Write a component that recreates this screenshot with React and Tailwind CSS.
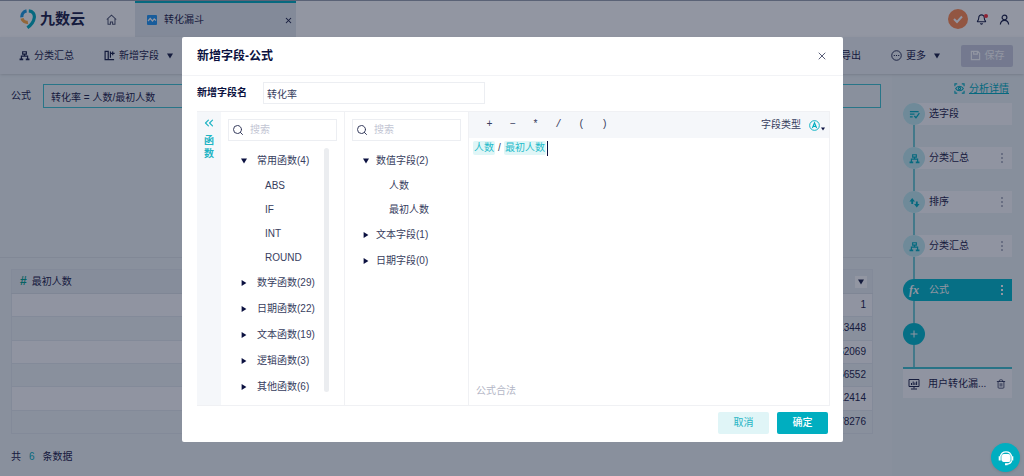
import React, { useState } from 'react';
import { Bell, Search, Trash2, X, ChevronsLeft } from 'lucide-react';

const OPERATORS = ['+', '−', '*', '/', '(', ')'];

const FUNCTION_GROUPS = [
  { name: '常用函数', count: 4, items: ['ABS', 'IF', 'INT', 'ROUND'] },
  { name: '数学函数', count: 29, items: [] },
  { name: '日期函数', count: 22, items: [] },
  { name: '文本函数', count: 19, items: [] },
  { name: '逻辑函数', count: 3, items: [] },
  { name: '其他函数', count: 6, items: [] },
];

const FIELD_GROUPS = [
  { name: '数值字段', count: 2, items: ['人数', '最初人数'] },
  { name: '文本字段', count: 1, items: [] },
  { name: '日期字段', count: 0, items: [] },
];

const STEPS = [
  { name: '选字段', icon: SelectIcon },
  { name: '分类汇总', icon: GroupIcon, menu: true },
  { name: '排序', icon: SortIcon, menu: true },
  { name: '分类汇总', icon: GroupIcon, menu: true },
  { name: '公式', icon: FxIcon, menu: true, active: true },
];

const ROWS = ['1', '0.79313448', '0.62062069', '0.46556552', '0.32412414', '0.18278276'];

function GroupIcon() {
  return (
    <svg viewBox="0 0 12 12" fill="none" stroke="currentColor" strokeWidth="1.3" className="size-[11px]">
      <path d="M4 1.900h4v2.600H4zM6 4.500v2M2.600 10V6.600h6.800V10" />
      <path d="M.6 10.300h4M7.400 10.300h4" strokeWidth="1.800" />
    </svg>
  );
}

function SelectIcon() {
  return (
    <svg viewBox="0 0 12 12" fill="none" stroke="currentColor" strokeWidth="1.4" className="size-[11px]">
      <path d="M1 2.800h9.500M1 5.700h5M1 8.600h3M5.800 7.600l1.800 2L11.300 4.600" />
    </svg>
  );
}

function SortIcon() {
  return (
    <svg viewBox="0 0 12 12" fill="currentColor" className="size-[11px]">
      <path d="M3.500 1L6.500 4.800H4.500V7.600h-2V4.800H.5zM8.500 11.400L5.500 7.600h2V4.800h2v2.800h2z" />
    </svg>
  );
}

function FxIcon() {
  return <span className="font-['Liberation_Serif',serif] text-xs font-bold italic leading-none">fx</span>;
}

function AddFieldIcon() {
  return (
    <svg viewBox="0 0 12 12" fill="none" stroke="currentColor" strokeWidth="1.3" className="size-[11px]">
      <path d="M1.200 1.500h3.400v9H1.200zM4.600 10.400H11M7 1.500v7M9.500 1.600v4.200M7.400 3.700h4.200" />
    </svg>
  );
}

function MonitorIcon() {
  return (
    <svg viewBox="0 0 12 12" fill="none" stroke="currentColor" className="size-3 shrink-0">
      <path d="M1 1.500h10v7H1zM6 8.500v2M3 11h6M3.500 7V5M5.200 7V3.500M6.900 7V4.500M8.600 7V3.500" />
    </svg>
  );
}

function Logo() {
  return (
    <svg viewBox="0 0 16 20" fill="none" strokeWidth="3.2" className="h-5 w-4">
      <path d="M6.600 1.900A5.800 5.800 0 0 0 1.900 8.300" stroke="#1d9be0" />
      <path d="M2 9.400a5.200 5.200 0 0 0 5.900 3.900" stroke="#ffa940" />
      <path d="M8.800 1.900c4 .2 5.900 3 5.500 6.700C13.800 12.500 11.300 16 7.400 18.700" stroke="#00aec0" />
    </svg>
  );
}

function Caret({ open = true, className = 'size-[6px]' }) {
  return (
    <svg viewBox="0 0 6 6" fill="currentColor" className={`shrink-0 ${className}`}>
      {open ? <path d="M0 .6h6L3 5.400z" /> : <path d="M.6 0v6L5.400 3z" />}
    </svg>
  );
}

function Dots() {
  return (
    <svg viewBox="0 0 2 10" fill="currentColor" className="h-[10px] w-[2px]">
      <path d="M0 0h2v2H0zM0 4h2v2H0zM0 8h2v2H0z" />
    </svg>
  );
}

function Header() {
  return (
    <header className="flex h-[37px] border-t border-gray-400 bg-white">
      <div className="flex w-[135px] items-center pl-5">
        <Logo />
        <span className="ml-1 text-[15px] font-bold">九数云</span>
        <button aria-label="首页" className="ml-[21px] text-[#4a4f6b]">
          <svg viewBox="0 0 12 12" fill="none" stroke="currentColor" strokeWidth="1.100" className="size-[11px]">
            <path d="M.8 6L6 1.200 11.200 6M2.200 5v6.200h2.600V8.600h2.400v2.600h2.600V5" />
          </svg>
        </button>
      </div>
      <div className="flex w-[161px] items-center border-t-2 border-[#00aec0] bg-[#e4e9ee] pl-3 pr-[3px]">
        <svg viewBox="0 0 10 10" className="size-[10px]">
          <rect width="10" height="10" rx="1" fill="#2196f3" />
          <path d="M1 6l2.200-2.500L5.500 6l1.700-2.200L9 5.500" fill="none" stroke="#fff" strokeWidth="1.200" />
        </svg>
        <span className="ml-[7px] flex-1">转化漏斗</span>
        <button aria-label="关闭" className="flex size-[10px] items-center justify-center">
          <X size={9} strokeWidth={2.800} className="shrink-0" />
        </button>
      </div>
      <div className="flex flex-1 items-center justify-end gap-2 pr-[14px]">
        <span className="flex size-5 items-center justify-center rounded-full bg-[#ff8a50] text-white">
          <svg viewBox="0 0 12 12" fill="none" stroke="currentColor" strokeWidth="2" className="size-3">
            <path d="M2 6l3 3 5-5.500" />
          </svg>
        </span>
        <button aria-label="通知" className="relative">
          <Bell size={11} strokeWidth={2.400} />
          <span className="absolute -right-px top-0 size-[4px] rounded-full bg-red-500" />
        </button>
        <button aria-label="用户" className="ml-1">
          <svg viewBox="0 0 12 12" fill="none" stroke="currentColor" strokeWidth="1.300" className="size-[11px]">
            <circle cx="6" cy="3.800" r="2.600" />
            <path d="M1.500 11.500c.2-3 2-4.600 4.500-4.600s4.300 1.600 4.500 4.600" />
          </svg>
        </button>
      </div>
    </header>
  );
}

function Toolbar() {
  return (
    <div className="relative flex h-[37px] items-center bg-[#eef3f6] pl-[19px] pr-[11px] shadow-sm">
      <button className="flex items-center gap-1">
        <GroupIcon />
        分类汇总
      </button>
      <button className="ml-[30px] flex items-center gap-1">
        <AddFieldIcon />
        新增字段
        <Caret className="ml-1 size-[6px]" />
      </button>
      <button className="ml-auto">导出</button>
      <button className="ml-[30px] flex items-center gap-1">
        <svg viewBox="0 0 12 12" fill="none" stroke="currentColor" className="size-[11px]">
          <circle cx="6" cy="6" r="5.200" />
          <path d="M3 6h1.200M5.400 6h1.200M7.800 6H9" strokeWidth="1.300" />
        </svg>
        更多
        <Caret className="ml-1 size-[6px]" />
      </button>
      <button className="ml-[21px] flex h-[22px] w-[52px] items-center justify-center gap-1 rounded-xs bg-[#c8cbdc] text-white">
        <svg viewBox="0 0 12 12" fill="none" stroke="currentColor" strokeWidth="1.300" className="size-[11px]">
          <path d="M1.500 1.500h7l2 2v7h-9zM4 1.500v3h4v-3" />
        </svg>
        保存
      </button>
    </div>
  );
}

function DataTable() {
  return (
    <table className="h-[165px] w-full border border-[#e4e9ee]">
      <thead>
        <tr className="h-6 bg-[#eaeff3]">
          <th className="h-6 border-b border-[#dde2e8] pl-2 text-left font-normal leading-3">
            <span className="mr-[5px] text-xs font-bold leading-3 text-[#00a08c]">#</span>最初人数
          </th>
          <th className="h-6 border-b border-[#dde2e8] pr-[5px]">
            <button aria-label="筛选" className="ml-auto flex size-3 items-center justify-center bg-white">
              <Caret />
            </button>
          </th>
        </tr>
      </thead>
      <tbody>
        {ROWS.map((value) => (
          <tr key={value} className="border-b border-[#e4e9ee] odd:bg-[#fcfcfe]">
            <td />
            <td className="pr-[6px] text-right">{value}</td>
          </tr>
        ))}
      </tbody>
    </table>
  );
}

function Connector() {
  return <div className="ml-[10px] h-[22px] w-[2px] bg-[#6fcad3]" />;
}

function Step({ step }) {
  const Icon = step.icon;
  return (
    <>
      <div className={`flex h-[22px] items-center rounded-l-full ${step.active ? 'bg-[#00b8ca] text-white' : 'bg-[#fcfcfe]'}`}>
        <span className={`flex size-[22px] items-center justify-center rounded-full ${step.active ? '' : 'bg-[#bfeaef] text-[#00aec0]'}`}>
          <Icon />
        </span>
        <span className="ml-1 flex-1">{step.name}</span>
        {step.menu && (
          <button aria-label="更多操作" className={`mr-[9px] ${step.active ? '' : 'text-[#b4b8c6]'}`}>
            <Dots />
          </button>
        )}
      </div>
      <Connector />
    </>
  );
}

function Sidebar() {
  return (
    <aside className="w-[132px] bg-[#ecf2f4] pl-[11px] pr-3">
      <div className="flex h-[29px] items-center justify-end gap-1 pr-[3px] text-[#00aec0]">
        <svg viewBox="0 0 12 12" fill="none" stroke="currentColor" strokeWidth="1.200" className="size-[11px]">
          <path d="M1 3.500V1h2.500M8.500 1H11v2.500M11 8.500V11H8.500M3.500 11H1V8.500M1.800 6c2-3.300 6.400-3.300 8.400 0-2 3.300-6.400 3.300-8.400 0z" />
          <circle cx="6" cy="6" r="1.200" />
        </svg>
        <a href="#detail" className="underline">分析详情</a>
      </div>
      {STEPS.map((step, i) => (
        <Step key={i} step={step} />
      ))}
      <button aria-label="添加步骤" className="flex size-[22px] items-center justify-center rounded-full bg-[#00b8ca] text-white">
        <svg viewBox="0 0 8 8" stroke="currentColor" className="size-2">
          <path d="M4 .5v7M.5 4h7" />
        </svg>
      </button>
      <Connector />
      <div className="flex h-[31px] items-center border-t-2 border-[#3fc0cc] bg-[#fcfcfe] pl-[5px] pr-[6px]">
        <MonitorIcon />
        <span className="ml-2 flex-1 whitespace-nowrap">用户转化漏...</span>
        <button aria-label="删除">
          <Trash2 size={10} strokeWidth={1.800} />
        </button>
      </div>
    </aside>
  );
}

function Tree({ groups, indent }) {
  const [open, setOpen] = useState(groups[0].name);

  return (
    <ul>
      {groups.map((g) => (
        <li key={g.name}>
          <button
            onClick={() => setOpen(open === g.name ? null : g.name)}
            className={`flex h-[26px] items-center ${indent ? 'gap-[10px]' : 'gap-[7px]'}`}
          >
            <Caret open={open === g.name} className="size-[6px] text-[#0b1140]" />
            {g.name}({g.count})
          </button>
          {open === g.name && g.items.map((item) => (
            <button key={item} className={`flex h-6 items-center ${indent ? 'pl-6' : 'pl-[26px]'}`}>
              {item}
            </button>
          ))}
        </li>
      ))}
    </ul>
  );
}

function SearchBox({ label }) {
  return (
    <label className="flex h-[22px] items-center gap-[6px] border border-[#eceef2] px-[3px]">
      <Search size={12} strokeWidth={2} className="shrink-0" />
      <input aria-label={label} placeholder="搜索" className="w-full min-w-0 outline-none placeholder:text-[#c3c6d4]" />
    </label>
  );
}

function Editor() {
  return (
    <div className="flex min-w-0 flex-1 flex-col">
      <div className="flex h-[26px] items-center bg-[#f5f7fa] pl-[9px] pr-1">
        {OPERATORS.map((op) => (
          <button key={op} className="w-[23px] text-center font-['Liberation_Mono',monospace]">{op}</button>
        ))}
        <span className="ml-auto">字段类型</span>
        <button aria-label="字段类型" className="ml-2 flex items-end gap-px">
          <svg viewBox="0 0 12 12" fill="none" stroke="#00aec0" className="size-[11px]">
            <circle cx="6" cy="6" r="5.300" />
            <path d="M3.700 8.800L6 3l2.300 5.800M4.500 7h3" strokeWidth="1.200" />
          </svg>
          <Caret className="size-[4px] text-[#0b1140]" />
        </button>
      </div>
      <div
        role="textbox"
        aria-label="公式"
        contentEditable
        suppressContentEditableWarning
        className="flex flex-1 items-start pl-1 pt-[3px] leading-[14px] outline-none"
      >
        <span className="rounded-xs bg-[#e0f6f7] px-px text-[#1fbccb]">人数</span>
        <span className="w-[9px] text-center">/</span>
        <span className="rounded-xs bg-[#e0f6f7] px-px text-[#1fbccb]">最初人数</span>
        <span className="ml-px h-[15px] w-px bg-[#0b1140]" />
      </div>
      <p className="h-[28px] pl-[7px] leading-7 text-[#b3b6c6]">公式合法</p>
    </div>
  );
}

function FormulaDialog() {
  const [name, setName] = useState('转化率');

  return (
    <div className="fixed inset-0 flex items-start justify-center bg-[#0e1630]/45 pl-px pt-[37px]">
      <div role="dialog" aria-labelledby="dialog-title" className="w-[661px] rounded-xs bg-white text-[#373d5e]">
        <div className="flex h-[39px] items-center justify-between border-b border-[#f2f3f6] px-[15px]">
          <h2 id="dialog-title" className="text-xs font-bold text-[#0b1140]">新增字段-公式</h2>
          <button aria-label="关闭" className="text-[#5a5f78]">
            <X size={12} strokeWidth={2} />
          </button>
        </div>
        <div className="pl-[15px] pr-[13px] pt-[6px]">
          <div className="flex items-center">
            <label htmlFor="field-name" className="w-[66px] font-bold text-[#0b1140]">新增字段名</label>
            <input
              id="field-name"
              value={name}
              onChange={(e) => setName(e.target.value)}
              className="h-[22px] w-[222px] border border-[#eceef2] px-[3px] outline-none"
            />
          </div>
          <div className="mt-[7px] flex h-[295px] border-y border-r border-[#f0f1f4]">
            <button className="flex w-6 flex-col items-center bg-[#f5f7fa] pt-1 font-bold leading-[13px] text-[#1fb4c4]">
              <ChevronsLeft size={14} strokeWidth={2} className="mb-1" />
              <span>函</span>
              <span>数</span>
            </button>
            <div className="w-[124px] border-r border-[#f0f1f4] px-[7px] pt-[7px]">
              <SearchBox label="搜索函数" />
              <div className="mt-[7px] flex justify-between pl-[13px]">
                <Tree groups={FUNCTION_GROUPS} indent />
                <div className="mr-2 h-[244px] w-[5px] rounded-full bg-[#ebedf0]" />
              </div>
            </div>
            <div className="w-[124px] border-r border-[#f0f1f4] px-[7px] pt-[7px]">
              <SearchBox label="搜索字段" />
              <div className="mt-[7px] pl-[11px]">
                <Tree groups={FIELD_GROUPS} />
              </div>
            </div>
            <Editor />
          </div>
        </div>
        <div className="flex justify-end gap-2 px-[15px] pb-2 pt-[6px]">
          <button className="h-[22px] w-[51px] rounded-xs bg-[#e0f5f7] text-[#1fb4c4]">取消</button>
          <button className="h-[22px] w-[51px] rounded-xs bg-[#00aec0] font-medium text-white">确定</button>
        </div>
      </div>
    </div>
  );
}

export default function App() {
  return (
    <div className="flex min-h-screen flex-col bg-[#eef4f6] font-['Liberation_Sans','Noto_Sans_CJK_SC',sans-serif] text-[10px] leading-[14px] text-[#1c2148]">
      <Header />
      <Toolbar />
      <div className="flex flex-1">
        <main className="min-w-0 flex-1">
          <div className="flex h-[184px] items-start border-b border-[#e0e5ea] px-[11px] pt-[10px]">
            <label htmlFor="formula" className="w-8 leading-6">公式</label>
            <input
              id="formula"
              readOnly
              value="转化率 = 人数/最初人数"
              className="h-6 min-w-0 flex-1 border border-[#3fc4d0] px-[7px] outline-none"
            />
          </div>
          <div className="pl-[11px] pr-[19px] pt-[11px]">
            <DataTable />
            <p className="mt-4 flex gap-2">
              <span>共</span>
              <span className="text-[#00aec0]">6</span>
              <span>条数据</span>
            </p>
          </div>
        </main>
        <Sidebar />
      </div>
      <FormulaDialog />
      <button aria-label="在线客服" className="fixed bottom-1 right-1 flex size-[29px] items-center justify-center rounded-full bg-[#00aec0] text-white shadow">
        <svg viewBox="0 0 16 16" fill="none" stroke="currentColor" strokeWidth="1.200" className="size-4">
          <path d="M2.300 6.500C3 3.300 5 1.800 8 1.800s5 1.500 5.700 4.700M13.700 10.500c-.5 2-2.200 3.600-5 3.700" />
          <rect x="4" y="4.500" width="8" height="7" rx="2" fill="currentColor" />
          <path d="M1.700 6.300v4.200M14.300 6.300v4.200M7 14.200h2.500" strokeWidth="2" />
        </svg>
      </button>
    </div>
  );
}
